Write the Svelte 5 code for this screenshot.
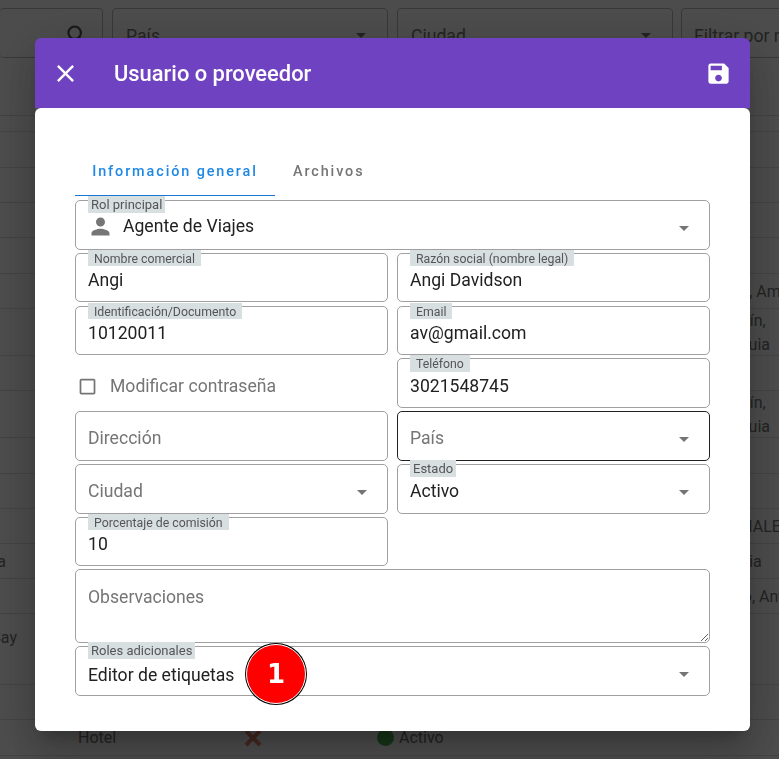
<script>
  const rows = [
    { h: 16 }, { h: 36 }, { h: 35 }, { h: 35 }, { h: 36 },
    { h: 35, right: "Leticia, Amazonas" },
    { h: 47, right: "Medellín,\nAntioquia" },
    { h: 35 },
    { h: 47, right: "Medellín,\nAntioquia" },
    { h: 36 }, { h: 35 },
    { h: 35, right: "MUNDIALES" },
    { h: 35, left: "a", leftEnd: 6, right: "Armenia" },
    { h: 35, right: "Marino, Antioquia" },
    { h: 71, left: "Say\n\u00a0", leftEnd: 17 },
    { h: 35 },
    { h: 36, hotel: true },
    { h: 36 },
  ];
</script>

{#snippet arrow()}
  <svg class="arrow" viewBox="0 0 24 24"><path d="M7 10l5 5 5-5z" /></svg>
{/snippet}

<div class="page">
  <div class="filters">
    <div class="filter first">
      <svg class="search" viewBox="0 0 24 24"><path d="M15.5 14h-.79l-.28-.27C15.41 12.59 16 11.11 16 9.5 16 5.91 13.09 3 9.5 3S3 5.91 3 9.5 5.91 16 9.5 16c1.61 0 3.09-.59 4.23-1.57l.27.28v.79l5 4.99L20.49 19l-4.99-5zm-6 0C7.01 14 5 11.99 5 9.5S7.01 5 9.5 5 14 7.01 14 9.5 11.99 14 9.5 14z" /></svg>
    </div>
    <div class="filter">País {@render arrow()}</div>
    <div class="filter">Ciudad {@render arrow()}</div>
    <div class="filter last">Filtrar por nombre</div>
  </div>
  <div class="toolbar"></div>
  {#each rows as r}
    <div class="row" style="height:{r.h}px">
      {#if r.left}
        <span class="left" style="width:{r.leftEnd}px">{r.left}</span>
      {/if}
      {#if r.right}
        <span class="right">{r.right}</span>
      {/if}
      {#if r.hotel}
        <span class="hotel">Hotel</span>
        <svg class="cross" viewBox="0 0 20 20"><path d="M3 3l14 14M17 3L3 17" /></svg>
        <span class="dot"></span>
        <span class="state">Activo</span>
      {/if}
    </div>
  {/each}
</div>

<div class="backdrop"></div>

<div class="dialog">
  <header>
    <svg class="close" viewBox="0 0 24 24"><path d="M19 6.41 17.59 5 12 10.59 6.41 5 5 6.41 10.59 12 5 17.59 6.41 19 12 13.41 17.59 19 19 17.59 13.41 12z" /></svg>
    <h2>Usuario o proveedor</h2>
    <svg class="save" viewBox="0 0 24 24"><path d="M17 3H5c-1.11 0-2 .9-2 2v14c0 1.1.89 2 2 2h14c1.1 0 2-.9 2-2V7l-4-4zm-5 16c-1.66 0-3-1.34-3-3s1.34-3 3-3 3 1.34 3 3-1.34 3-3 3zm3-10H5V5h10v4z" /></svg>
  </header>

  <div class="content">
    <div class="tabs">
      <div class="tab active">Información general</div>
      <div class="tab">Archivos</div>
    </div>

    <div class="form">
      <div class="field wide select">
        <span class="lbl tight">Rol principal</span>
        <svg class="person" viewBox="0 0 24 24"><path d="M12 12c2.21 0 4-1.79 4-4s-1.79-4-4-4-4 1.79-4 4 1.79 4 4 4zm0 2c-2.67 0-8 1.34-8 4v2h16v-2c0-2.66-5.33-4-8-4z" /></svg>
        <span class="val up">Agente de Viajes</span>
        {@render arrow()}
      </div>

      <div class="field"><span class="lbl">Nombre comercial</span><span class="val">Angi</span></div>
      <div class="field"><span class="lbl">Razón social (nombre legal)</span><span class="val">Angi Davidson</span></div>

      <div class="field"><span class="lbl">Identificación/Documento</span><span class="val">10120011</span></div>
      <div class="field"><span class="lbl">Email</span><span class="val">av@gmail.com</span></div>

      <label class="check">
        <svg viewBox="0 0 24 24"><path d="M19 5v14H5V5h14m0-2H5c-1.1 0-2 .9-2 2v14c0 1.1.9 2 2 2h14c1.1 0 2-.9 2-2V5c0-1.1-.9-2-2-2z" /></svg>
        Modificar contraseña
      </label>
      <div class="field"><span class="lbl">Teléfono</span><span class="val">3021548745</span></div>

      <div class="field"><span class="ph">Dirección</span></div>
      <div class="field select focused"><span class="ph">País</span>{@render arrow()}</div>

      <div class="field select"><span class="ph">Ciudad</span>{@render arrow()}</div>
      <div class="field select"><span class="lbl tight">Estado</span><span class="val">Activo</span>{@render arrow()}</div>

      <div class="field"><span class="lbl">Porcentaje de comisión</span><span class="val">10</span></div>
      <div></div>

      <textarea class="wide" placeholder="Observaciones"></textarea>

      <div class="field wide select">
        <span class="lbl tight">Roles adicionales</span>
        <span class="val down">Editor de etiquetas</span>
        {@render arrow()}
        <span class="badge">1</span>
      </div>
    </div>
  </div>
</div>

<style>
  :global(body) {
    font-family: Roboto, sans-serif;
    overflow: hidden;
  }

  .page {
    height: 759px;
    overflow: hidden;
    background: #fff;
    color: #757575;
    font-size: 16px;
  }

  .filters {
    display: flex;
    gap: 9px;
    padding-top: 8px;
  }
  .filter {
    flex: 0 0 276px;
    box-sizing: border-box;
    height: 50px;
    border: 1px solid #bbb;
    border-radius: 4px;
    padding-left: 13px;
    font-size: 17.6px;
    line-height: 54px;
    position: relative;
  }
  .filter.first {
    flex: 0 0 103px;
    border-left: 0;
  }
  .filter.last {
    flex: 1 0 300px;
    margin-right: -220px;
    padding-left: 12px;
    margin-left: -1px;
  }
  .filter .arrow {
    top: 14px;
    right: 14px;
  }
  .search {
    position: absolute;
    width: 27px;
    height: 27px;
    left: 64px;
    top: 13px;
    fill: #555;
  }

  .toolbar {
    height: 57px;
    border-bottom: 1px solid #ddd;
  }
  .row {
    position: relative;
    box-sizing: border-box;
    border-bottom: 1px solid #e0e0e0;
    display: flex;
    align-items: center;
    line-height: 24px;
  }
  .left {
    display: flex;
    justify-content: flex-end;
    white-space: pre;
    flex: none;
    padding-top: 2px;
  }
  .right {
    position: absolute;
    left: 702px;
    white-space: pre;
    padding-top: 2px;
  }
  .hotel {
    margin-left: 78px;
    width: 165px;
  }
  .cross {
    width: 20px;
    height: 20px;
    fill: none;
    stroke: #e8836a;
    stroke-width: 4;
  }
  .dot {
    width: 17px;
    height: 17px;
    border-radius: 50%;
    background: #4caf50;
    margin-left: 114px;
  }
  .state {
    margin-left: 5px;
  }

  .backdrop {
    position: fixed;
    inset: 0;
    background: rgba(0, 0, 0, 0.7);
  }

  .dialog {
    position: fixed;
    left: 35px;
    top: 38px;
    width: 715px;
    box-shadow: 0 11px 15px -7px rgba(0, 0, 0, 0.2), 0 24px 38px 3px rgba(0, 0, 0, 0.14), 0 9px 46px 8px rgba(0, 0, 0, 0.12);
    border-radius: 6px;
  }

  header {
    height: 70px;
    background: #6f42c1;
    border-radius: 6px 6px 0 0;
    display: flex;
    align-items: center;
    color: #fff;
    padding: 0 18px 0 16px;
  }
  .close {
    width: 29px;
    height: 29px;
    fill: #fff;
    flex: none;
  }
  h2 {
    margin: 0 0 0 34px;
    font-size: 21.9px;
    font-weight: 500;
    flex: 1;
  }
  .save {
    width: 27px;
    height: 27px;
    fill: #fff;
    flex: none;
  }

  .content {
    background: #fff;
    border-radius: 6px;
    padding: 39px 40px 35px;
    box-sizing: border-box;
    height: 623px;
  }

  .tabs {
    display: flex;
    height: 49px;
    margin-bottom: 4px;
    font-size: 14.4px;
    font-weight: 500;
    letter-spacing: 1.9px;
    color: #757575;
  }
  .tab {
    display: flex;
    align-items: center;
    justify-content: center;
    padding: 0 18px;
    box-sizing: border-box;
  }
  .tab.active {
    width: 200px;
    color: #1e88e5;
    border-bottom: 1px solid #1976d2;
    padding: 0;
  }

  .form {
    display: grid;
    grid-template-columns: 1fr 1fr;
    column-gap: 9px;
    row-gap: 3.2px;
  }
  .wide {
    grid-column: 1 / 3;
  }

  .field {
    position: relative;
    box-sizing: border-box;
    height: 49.6px;
    border: 1px solid #a0a0a0;
    border-radius: 5px;
    display: flex;
    align-items: center;
    padding: 0 12px;
    font-size: 17.6px;
    color: #212121;
  }
  .field.focused {
    border-color: #212121;
  }
  .lbl {
    position: absolute;
    left: 12px;
    top: -4px;
    height: 16.5px;
    line-height: 19px;
    overflow: hidden;
    padding: 0 6px;
    background: #d8dfe1;
    font-size: 12.3px;
    color: #555;
    white-space: nowrap;
  }
  .lbl.tight {
    padding: 0 3px;
    font-size: 13px;
    top: -5px;
    height: 17px;
    line-height: 17px;
  }
  .val {
    padding-top: 5px;
  }
  .val.up {
    padding-top: 3px;
  }
  .val.down {
    padding-top: 7px;
  }
  .ph {
    color: #757575;
    padding-top: 5px;
  }
  .arrow {
    position: absolute;
    right: 13px;
    top: 15px;
    width: 24px;
    height: 24px;
    fill: #757575;
  }
  .person {
    width: 27px;
    height: 27px;
    fill: #757575;
    margin: 0 9px 0 -1px;
    flex: none;
    position: relative;
    top: 2px;
  }

  .check {
    display: flex;
    align-items: center;
    gap: 12px;
    padding: 6px 0 0 2px;
    font-size: 17.6px;
    color: #757575;
  }
  .check svg {
    width: 21px;
    height: 21px;
    fill: #757575;
  }

  textarea {
    box-sizing: border-box;
    height: 73.6px;
    border: 1px solid #a0a0a0;
    border-radius: 5px;
    padding: 17px 12px;
    font: 17.6px Roboto, sans-serif;
    outline: none;
    display: block;
    width: 100%;
  }
  textarea::placeholder {
    color: #757575;
    opacity: 1;
  }

  .badge {
    position: absolute;
    left: 170px;
    top: -3px;
    box-sizing: border-box;
    width: 60px;
    height: 60px;
    border-radius: 50%;
    background: #f00;
    border: 1px solid #fff;
    box-shadow: 0 0 0 1px #000;
    color: #fff;
    font: bold 26px "DejaVu Sans", sans-serif;
    display: flex;
    align-items: center;
    justify-content: center;
  }
</style>
